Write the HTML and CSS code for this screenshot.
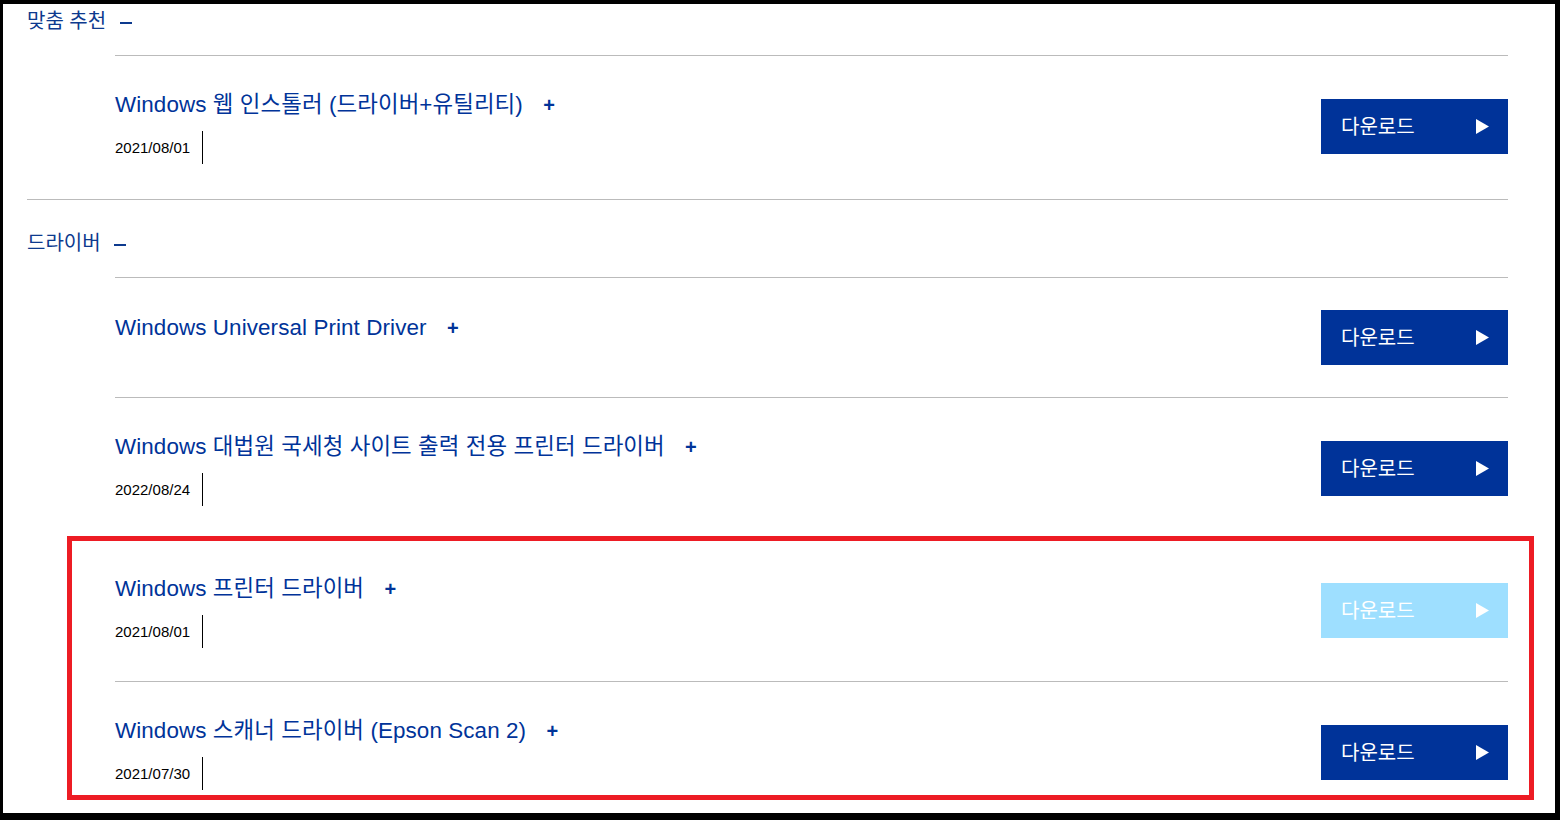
FILE: index.html
```html
<!DOCTYPE html>
<html lang="ko">
<head>
  <meta charset="UTF-8" />
  <meta name="viewport" content="width=device-width, initial-scale=1.0" />
  <title>드라이버 다운로드</title>
  <link rel="stylesheet" href="styles.css">
</head>
<body>
  <div class="frame">
    <div class="content">

      <div class="section section-first">
        <h2 class="section-title">맞춤 추천 <span class="toggle-minus"></span></h2>
        <ul class="item-list">
          <li class="item">
            <div class="item-info">
              <div class="item-title">Windows 웹 인스톨러 (드라이버+유틸리티) <span class="toggle-plus">+</span></div>
              <div class="item-meta"><span class="item-date">2021/08/01</span></div>
            </div>
            <a class="btn-download" href="#"><span>다운로드</span> <svg width="13" height="15" viewBox="0 0 13 15"><polygon points="0,0 13,7.5 0,15" fill="#fff"/></svg></a>
          </li>
        </ul>
      </div>

      <div class="section">
        <h2 class="section-title">드라이버 <span class="toggle-minus"></span></h2>
        <ul class="item-list">
          <li class="item">
            <div class="item-info">
              <div class="item-title">Windows Universal Print Driver <span class="toggle-plus">+</span></div>
              <div class="item-meta item-meta-empty"></div>
            </div>
            <a class="btn-download" href="#"><span>다운로드</span> <svg width="13" height="15" viewBox="0 0 13 15"><polygon points="0,0 13,7.5 0,15" fill="#fff"/></svg></a>
          </li>
          <li class="item">
            <div class="item-info">
              <div class="item-title">Windows 대법원 국세청 사이트 출력 전용 프린터 드라이버 <span class="toggle-plus">+</span></div>
              <div class="item-meta"><span class="item-date">2022/08/24</span></div>
            </div>
            <a class="btn-download" href="#"><span>다운로드</span> <svg width="13" height="15" viewBox="0 0 13 15"><polygon points="0,0 13,7.5 0,15" fill="#fff"/></svg></a>
          </li>
          <li class="item">
            <div class="item-info">
              <div class="item-title">Windows 프린터 드라이버 <span class="toggle-plus">+</span></div>
              <div class="item-meta"><span class="item-date">2021/08/01</span></div>
            </div>
            <a class="btn-download btn-hover" href="#"><span>다운로드</span> <svg width="13" height="15" viewBox="0 0 13 15"><polygon points="0,0 13,7.5 0,15" fill="#fff"/></svg></a>
          </li>
          <li class="item">
            <div class="item-info">
              <div class="item-title">Windows 스캐너 드라이버 (Epson Scan 2) <span class="toggle-plus">+</span></div>
              <div class="item-meta"><span class="item-date">2021/07/30</span></div>
            </div>
            <a class="btn-download" href="#"><span>다운로드</span> <svg width="13" height="15" viewBox="0 0 13 15"><polygon points="0,0 13,7.5 0,15" fill="#fff"/></svg></a>
          </li>
        </ul>
      </div>

    </div>
    <div class="highlight"></div>
  </div>
</body>
</html>
```

FILE: styles.css
```css
body, html {
  margin: 0;
  padding: 0;
  height: 100%;
  overflow: hidden;
  font-family: 'Liberation Sans', Arial, 'Noto Sans CJK KR', sans-serif;
  background: #000;
}

.frame {
  position: relative;
  box-sizing: border-box;
  height: 820px;
  border-style: solid;
  border-color: #000;
  border-width: 4px 5px 7px 3px;
  background: #fff;
  overflow: hidden;
}

.content {
  padding: 0 47px 0 24px;
}

.section {
  border-bottom: 1px solid #bbb;
  padding-bottom: 2px;
}

.section-title {
  margin: 0;
  padding: 31px 0 22px 0;
  font-size: 20px;
  line-height: 24px;
  font-weight: normal;
  color: #0d3a8e;
}
.section-first .section-title {
  padding-top: 5px;
}

.toggle-minus {
  display: inline-block;
  width: 12px;
  height: 2px;
  margin-left: 8px;
  vertical-align: middle;
  background: #0d3a8e;
}

.item-list {
  list-style: none;
  margin: 0 0 0 88px;
  padding: 0;
}

.item {
  display: flex;
  justify-content: space-between;
  align-items: center;
  border-top: 1px solid #bbb;
  padding: 32px 0 32px 0;
}

.item-title {
  padding-top: 2px;
  font-size: 22.4px;
  line-height: 30px;
  color: #003399;
  letter-spacing: 0.1px;
}

.toggle-plus {
  margin-left: 14px;
  font-size: 20px;
  font-weight: bold;
}

.item-meta {
  display: flex;
  margin: 11px 0 1px 0;
  height: 33px;
}
.item-meta-empty {
  height: 10px;
}

.item-date {
  font-size: 15px;
  line-height: 33px;
  color: #000;
  padding-right: 12px;
  border-right: 1px solid #000;
}

.btn-download {
  display: flex;
  justify-content: space-between;
  align-items: center;
  box-sizing: border-box;
  width: 187px;
  height: 55px;
  padding: 0 19px 0 20px;
  background: #003399;
  color: #fff;
  font-size: 20px;
  text-decoration: none;
}
.btn-download span {
  margin-top: -3px;
}
.btn-hover {
  background: #9edfff;
}

.highlight {
  position: absolute;
  left: 64px;
  top: 532px;
  width: 1467px;
  height: 264px;
  box-sizing: border-box;
  border: 5px solid #ed1c24;
  pointer-events: none;
}
```
